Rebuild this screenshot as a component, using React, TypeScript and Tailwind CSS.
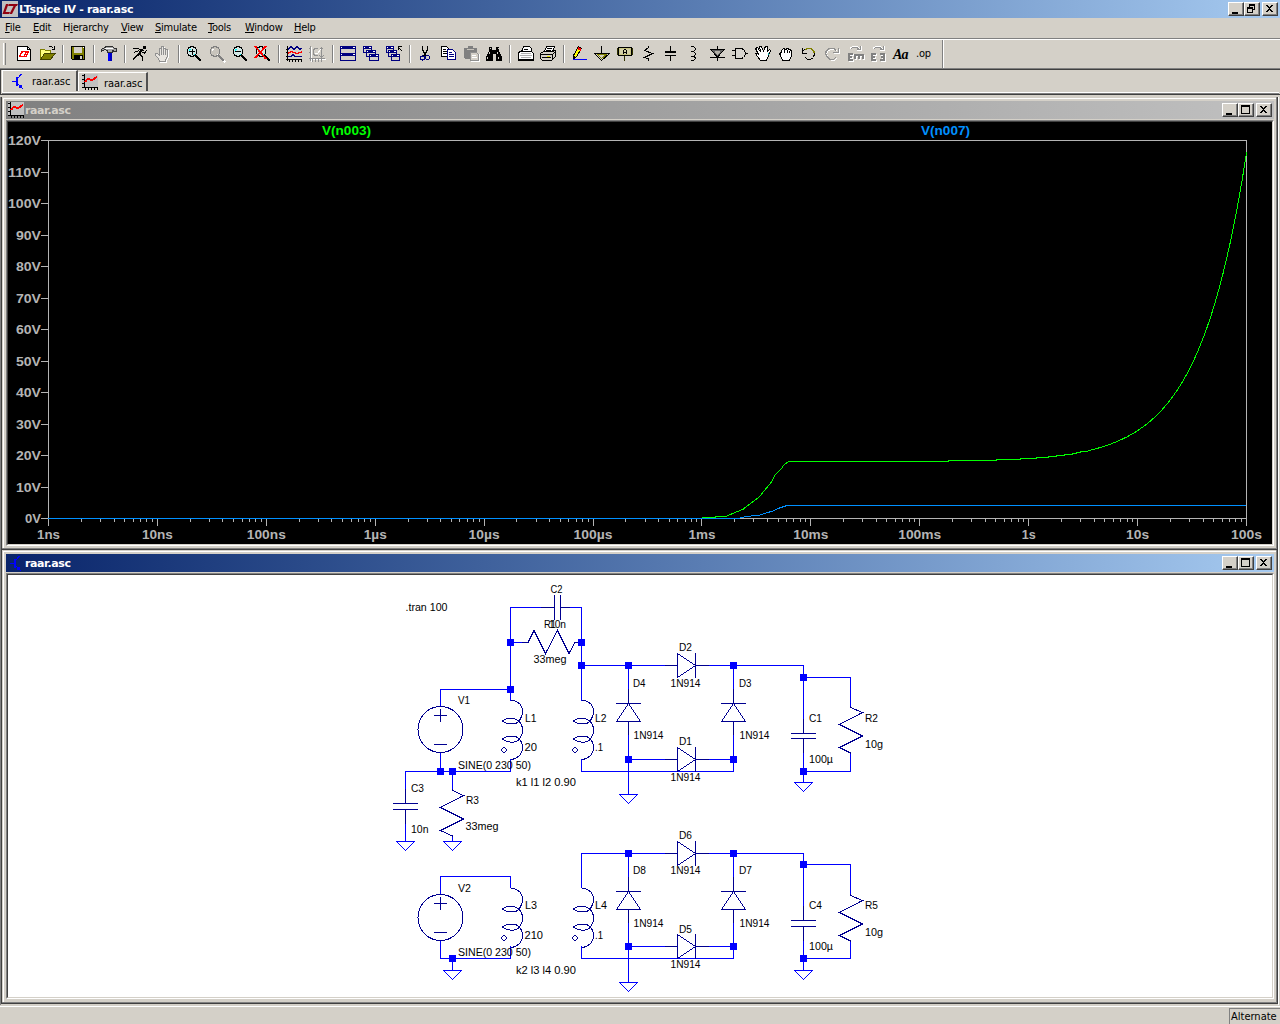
import React from "react";

type LineProps = { d: string; c?: string; f?: string; w?: number };
const L = ({ d, c = "#000", f = "none", w = 1 }: LineProps) => (
  <path d={d} stroke={c} fill={f} strokeWidth={w} />
);

const Icon = ({ children }: { children: React.ReactNode }) => (
  <div className="w-[23px] shrink-0 pl-[3px] pt-[5px]">
    <svg width="19" height="18" viewBox="0 0 19 18" shapeRendering="crispEdges" className="block overflow-visible">
      {children}
    </svg>
  </div>
);

const Sep = () => (
  <div className="flex h-[28px] w-[8px] shrink-0 items-center pl-[4px]">
    <div className="h-[18px] w-[2px] border-l border-r border-l-[#808080] border-r-white" />
  </div>
);

const Magnifier = ({ gray = false }: { gray?: boolean }) => (
  <>
    {gray && <L d="M12.5 12.5L17.5 17.5" c="#fff" w={2} />}
    <L d="M11 11L16 16" c={gray ? "#808080" : "#000"} w={2.4} />
    <circle cx="7" cy="6.5" r="4.8" fill={gray ? "#c8c4bc" : "#d4e8e6"} stroke={gray ? "#808080" : "#000"} strokeWidth="1.2" />
    <L d="M4.5 5.5V4.5H5.5M9.5 9.5V8.5" c={gray ? "#fff" : "#00ffff"} />
  </>
);

const HAND = "M5.5 16.5L4.5 13.5L1.5 10.5V8.5H3.5L5.5 10.5V3.5H7.5V1.5H9.5V3.5H11.5V4.5H13.5V11.5L11.5 14.5V16.5Z";

const MiniWin = ({ x, y, w = 9, h = 7 }: { x: number; y: number; w?: number; h?: number }) => (
  <>
    <rect x={x} y={y} width={w} height={h} fill="#000080" />
    <rect x={x + 1} y={y + 3} width={w - 2} height={h - 4} fill="#d4d0c8" />
    <rect x={x + 1} y={y + 1} width="1" height="1" fill="#fff" />
    <rect x={x + w - 3} y={y + 1} width="2" height="1" fill="#fff" />
  </>
);

const RotLetters = ({ mirror = false }: { mirror?: boolean }) => {
  const left = "M2 8h5v2H4v1h2v2H4v1h3v2H2z";
  const right = mirror ? "M11 8h5v8h-5v-2h3v-1h-2v-2h2v-1h-3z" : "M8 9h10v5h-2v-3h-2v3h-2v-3h-2v3H8z";
  return (
    <>
      <path d={left + right} fill="#fff" transform="translate(1 1)" />
      <L d="M4.5 4V3L6.5 1.5H11.5L14.5 4.5M15.5 1V5.5H11" c="#fff" />
      <L d="M5.5 4V3.5L7 2.5H11L13.5 4.5M14.5 1V4.5H11" c="#909090" />
      <path d={left + right} fill="#808080" />
    </>
  );
};

const Toolbar = () => (
  <div className="flex h-[28px] items-start">
    <div className="mt-[3px] ml-[3px] h-[22px] w-[3px] border-l border-r border-l-white border-r-[#808080]" />
    <div className="w-[6px]" />
    <Icon>
      <L d="M2.5 1.5H12.5L15.5 4.5V15.5H2.5Z" f="#fff" />
      <L d="M12.5 1.5V4.5H15.5" />
      <L d="M7.5 6L4.5 11.5H8.5M8 6.5H14M11.5 6.5L9 11.5H11L13.5 6.5" c="#f00" w={1.6} />
    </Icon>
    <Icon>
      <L d="M2.5 14V4.5H6.5L7.5 5.5H12.5V8" f="#ffff80" c="#808000" />
      <L d="M2.5 14.5L6.5 8.5H17L12.5 14.5Z" f="#808000" c="#404000" />
      <L d="M10.5 2.5L11.5 1.5H13.5L15.5 3.5M16.5 1V4.5H13.5" />
    </Icon>
    <Sep />
    <Icon>
      <L d="M2.5 1.5H15.5V14.5H3.5L2.5 13.5Z" f="#808000" />
      <rect x="5" y="2" width="8" height="6" fill="#d4d0c8" />
      <rect x="5" y="10" width="9" height="5" fill="#000" />
      <rect x="11" y="11" width="2" height="3" fill="#d4d0c8" />
      <rect x="14" y="2" width="1" height="1" fill="#fff" />
    </Icon>
    <Sep />
    <Icon>
      <rect x="8" y="7" width="4" height="9" fill="#0000c0" />
      <rect x="8" y="7" width="2" height="9" fill="#0000ff" />
      <L d="M1.5 6.5V4.5L4.5 2.5L6.5 1.5H12.5L14.5 3.5H16.5V6.5H14.5L12.5 5.5V7.5H7.5V5.5L4.5 4.5Z" f="#a8a8a8" c="#303030" />
      <L d="M5 3.5H13" c="#fff" />
    </Icon>
    <Sep />
    <Icon>
      <rect x="12" y="1" width="3" height="3" fill="#000" />
      <L d="M2 3.5H7.5L10.5 5.5H13M15.5 5L13.5 8.5L11 7" />
      <L d="M11 4L7.5 10" w={2.2} />
      <L d="M8 9.5L4.5 11.5L2 14.5M8.5 9.5L11.5 12V15.5H12" w={1.5} />
      <L d="M3 7.5L8 5.5" />
    </Icon>
    <Icon>
      <g transform="translate(1 1)"><L d={HAND} c="#fff" /></g>
      <L d={HAND} c="#909090" f="#e8e5e0" />
      <L d="M7.5 4V10M9.5 4V10M11.5 5V10" c="#909090" />
    </Icon>
    <Sep />
    <Icon><Magnifier /><L d="M4 6.5H10M7.5 4V10" /></Icon>
    <Icon><Magnifier gray /></Icon>
    <Icon><Magnifier /><L d="M4 6.5H10" /></Icon>
    <Icon><Magnifier /><L d="M1 1L12 14M12 1L1 13" c="#f00" w={1.8} /></Icon>
    <Sep />
    <Icon>
      <L d="M2.5 1V15.5M1 14.5H17M4.5 14V17M7.5 14V17M10.5 14V17M13.5 14V17M16.5 14V17M1 4.5H3M1 7.5H3M1 11.5H3" />
      <L d="M3 4.5L6 1.5L9 4.5L12 1.5L15 4.5L17 3" c="#000080" />
      <L d="M3 8.5L6 6.5L9 7.5L12 8.5L17 7" c="#f00" w={1.3} />
      <L d="M3 11.5H6L8 9.5L10 11.5H17" c="#000080" />
    </Icon>
    <Icon>
      <g transform="translate(1 1)"><L d="M2.5 1V15.5M1 13.5H17M5.5 7H9L12 3" c="#fff" /></g>
      <L d="M2.5 1V16M1 13.5H17M4.5 14V17M7.5 14V17M10.5 14V17M13.5 14V17M1 3.5H3M1 7.5H3M10 3.5H7L5.5 5V9L7 10.5H10M13.5 2V12M11.5 4.5L13.5 2.5L15.5 4.5M11.5 10.5L13.5 12.5L15.5 10.5" c="#909090" />
    </Icon>
    <Sep />
    <Icon><MiniWin x={1} y={1} w={16} h={8} /><MiniWin x={1} y={8} w={16} h={8} /></Icon>
    <Icon><MiniWin x={1} y={1} /><MiniWin x={4} y={5} w={10} /><MiniWin x={7} y={9} w={10} /></Icon>
    <Icon><MiniWin x={1} y={1} w={8} /><MiniWin x={3} y={5} /><MiniWin x={6} y={9} /><L d="M17 6L13.5 2.5M13.5 5V1.5H17" /></Icon>
    <Sep />
    <Icon>
      <L d="M6.5 1V5L10.5 11M11.5 1V5L7.5 11" w={1.3} />
      <circle cx="6.5" cy="13" r="2" fill="none" stroke="#000080" strokeWidth="1.2" />
      <circle cx="11.5" cy="12.5" r="2" fill="none" stroke="#000080" strokeWidth="1.2" />
    </Icon>
    <Icon>
      <L d="M2.5 1.5H7.5L10.5 4.5V11.5H2.5Z" f="#fff" />
      <L d="M4 4.5H7M4 6.5H9M4 8.5H9" />
      <L d="M8.5 4.5H13.5L16.5 7.5V14.5H8.5Z" f="#fff" c="#000080" />
      <L d="M10 7.5H13M10 9.5H15M10 11.5H15" c="#000080" />
    </Icon>
    <Icon>
      <path d="M2 3h4V1h5v2h4v11H3l-1-1z" fill="#808080" />
      <L d="M5 4.5H12" c="#c8c4bc" />
      <L d="M8.5 7.5H14.5L16.5 9.5V15.5H8.5Z" f="#d4d0c8" c="#909090" />
      <L d="M10 10.5H14M10 12.5H15M17.5 9V16.5H9" c="#fff" />
    </Icon>
    <Icon>
      <path d="M4 2h3v3h4V2h3v4l3 6v4h-6V9H8v7H1v-4l3-6z" fill="#000" />
      <L d="M4.5 7V9M2.5 12V14M12.5 7V9M13.5 12V14M5.5 3V4M13.5 3V4" c="#d4d0c8" />
    </Icon>
    <Sep />
    <Icon>
      <L d="M5.5 7L7.5 1.5H13.5L15.5 3.5V7" f="#fff" />
      <L d="M3.5 6.5H15.5L17.5 8.5V15.5H2.5V8.5Z" f="#fff" />
      <L d="M5 8.5H15M4 10.5H16M5 12.5H15" c="#b0b0b0" />
      <L d="M8 4.5H12M2.5 14.5H17" />
    </Icon>
    <Icon>
      <L d="M5.5 6.5L7.5 1.5H15.5L13.5 7" f="#fff" />
      <L d="M1.5 8.5L4.5 6.5H13.5L16.5 5.5V11.5L12.5 15.5H3.5L1.5 13.5Z" f="#d4d0c8" />
      <L d="M8 3.5H13M7 5.5H12M2 9.5H13.5L16 7M13.5 10V14M3 12.5H12" />
      <L d="M8 11.5H11" c="#e0e000" />
    </Icon>
    <Sep />
    <Icon>
      <L d="M8.5 1.5L11.5 3.5L6.5 11.5L3.5 13.5V10.5Z" f="#ff0" />
      <L d="M8 3L11 5" c="#f00" w={2} />
      <L d="M3.5 11V14" w={2} />
      <rect x="3" y="14" width="14" height="1" fill="#00f" />
    </Icon>
    <Icon><L d="M8.5 1V8" /><L d="M1.5 8.5H16.5L8.5 15.5Z" f="#d4d0c8" /><L d="M4.5 9.5H13.5L8.5 13.5Z" c="#808000" /></Icon>
    <Icon>
      <L d="M2.5 2.5H15.5V10.5H2.5Z" f="#d4d0a8" /><L d="M1.5 3V10M16.5 3V10M8.5 11V16" c="#303000" />
      <L d="M3.5 3.5H14.5V9.5H3.5Z" c="#c8c480" />
      <L d="M7.5 9V5.5L8.5 4.5H9.5L10.5 5.5V9M7 7.5H11" />
    </Icon>
    <Icon><L d="M9.5 0.5V2.5L5.5 5.5L13.5 8.5L5.5 12.5L9.5 14V16" /></Icon>
    <Icon><L d="M8.5 1V7M3 7H14M3 10.5H14M8.5 10.5V16" w={1.2} /></Icon>
    <Icon><L d="M6 1.5H8.5L10.5 3.5V4.5L8.5 6.5L10.5 8.5V9.5L8.5 11.5M8.5 11.5L10.5 12.5V13.5L8.5 15.5H6M6 6.5H9M6 11.5H9" /></Icon>
    <Icon><L d="M9.5 1V16M2 4.5H17M2 12.5H17M3 5L9.5 12L16 5" /><L d="M5 5.5H14L9.5 10.5Z" f="#b4b0a8" c="#606060" /></Icon>
    <Icon><L d="M1 5.5H5M1 10.5H5M14 8.5H17" /><L d="M4.5 3.5H10.5L12.5 4.5L14.5 7.5V9.5L12.5 12.5L10.5 13.5H4.5Z" f="#d8d5cf" /></Icon>
    <Icon>
      <L d="M6.5 15.5L3.5 11.5L1.5 8.5H3.5L4.5 9.5L1.5 3.5L3.5 2.5L6.5 7L5.5 1.5H7.5L9.5 6L11.5 1.5H13.5V6L15.5 4.5L16.5 5.5L14.5 10.5L12.5 15.5Z" f="#fff" />
      <L d="M14.5 8V10" c="#00a0a0" />
    </Icon>
    <Icon><L d="M5.5 15.5L3.5 10.5L2.5 8.5L4.5 7.5V5.5L6.5 3.5L8.5 4.5L10.5 3.5L12.5 4.5L14.5 5.5V10.5L12.5 15.5Z" f="#fff" /><L d="M7.5 5V8M10.5 5V8M12.5 6V8" /></Icon>
    <Icon><L d="M3 5.5L7.5 3.5H10.5L13.5 5.5L14.5 8.5L13.5 12.5L10.5 14.5H7.5L5.5 12.5" /><L d="M5.5 4.5L7.5 3.5H10.5L13.5 5.5L14.5 8.5" c="#808000" w={1.6} /><L d="M2.5 3V8.5H7" w={1.2} /></Icon>
    <Icon>
      <g transform="translate(1 1)"><L d="M13.5 5.5L10.5 3.5H6.5L3.5 5.5L2.5 8.5L4.5 12.5L7.5 14.5H10.5L12.5 12.5M15.5 3V7.5H10" c="#fff" /></g>
      <L d="M13.5 5.5L10.5 3.5H6.5L3.5 5.5L2.5 8.5L4.5 12.5L7.5 14.5H10.5L12.5 12.5M15.5 3V7.5H10" c="#909090" w={1.3} />
    </Icon>
    <Icon><RotLetters /></Icon>
    <Icon><RotLetters mirror /></Icon>
    <div className="w-[23px] pt-[6px] pl-[4px] font-['Liberation_Serif',serif] text-[14px] leading-[18px] font-bold tracking-[-0.8px] text-black italic">Aa</div>
    <div className="w-[23px] pt-[6px] pl-[4px] font-['DejaVu_Sans_Condensed',sans-serif] text-[11px] leading-[16px] tracking-[-0.2px] text-black">.op</div>
    <div className="ml-[7px] h-[28px] w-[2px] border-l border-r border-l-[#808080] border-r-white" />
  </div>
);

const CaptionButton = ({ kind }: { kind: "min" | "max" | "restore" | "close" }) => (
  <div
    className={
      "h-[14px] w-[16px] border border-t-white border-l-white border-r-[#404040] border-b-[#404040] bg-[#d4d0c8] shadow-[inset_-1px_-1px_0_#808080]" +
      (kind === "close" ? " ml-[2px]" : "")
    }
  >
    <svg width="14" height="12" viewBox="0 0 14 12" shapeRendering="crispEdges" className="block">
      {kind === "min" && <rect x="3" y="9" width="6" height="2" fill="#000" />}
      {kind === "max" && <><rect x="2.5" y="1.5" width="8" height="8" fill="none" stroke="#000" /><rect x="2" y="1" width="9" height="2" fill="#000" /></>}
      {kind === "restore" && (
        <>
          <rect x="4.5" y="1.5" width="5" height="5" fill="none" stroke="#000" />
          <rect x="4" y="1" width="6" height="2" fill="#000" />
          <rect x="2.5" y="4.5" width="5" height="5" fill="#d4d0c8" stroke="#000" />
          <rect x="2" y="4" width="6" height="2" fill="#000" />
        </>
      )}
      {kind === "close" && <path d="M3 2h2v1h1v1h1V3h1V2h2v1H9v1H8v1H7v1h1v1h1v1h1v1H8V8H7V7H6v1H5v1H3V8h1V7h1V6h1V5H5V4H4V3H3z" fill="#000" />}
    </svg>
  </div>
);

const PlotIcon = () => (
  <svg width="17" height="17" viewBox="0 0 17 17" shapeRendering="crispEdges" className="block shrink-0">
    <rect x="0" y="0" width="16" height="13" fill="#c0c0c0" />
    <L d="M2.5 0V13.5M0 13.5H16M0 1.5H3M0 5.5H3M0 9.5H3M3.5 14V16M6.5 14V16M9.5 14V16M12.5 14V16M15.5 14V16" />
    <L d="M3 8L6 4.5L10 6.5L15 2.5" c="#f00" w={1.8} />
  </svg>
);

const TransistorIcon = () => (
  <svg width="13" height="17" viewBox="0 0 13 17" shapeRendering="crispEdges" className="block shrink-0">
    <L d="M0 8.5H4M9.5 1L5 6M5 10L9.5 15" c="#00f" />
    <rect x="4" y="4" width="2" height="9" fill="#00f" />
    <path d="M6 14L11 16L9 11z" fill="#00f" />
  </svg>
);

const menu: [string, string, string, string][] = [
  ["", "F", "ile", "w-[28px]"],
  ["", "E", "dit", "w-[30px]"],
  ["H", "i", "erarchy", "w-[58px]"],
  ["", "V", "iew", "w-[34px]"],
  ["", "S", "imulate", "w-[53px]"],
  ["", "T", "ools", "w-[37px]"],
  ["", "W", "indow", "w-[49px]"],
  ["", "H", "elp", "w-[30px]"],
];

const X0 = 48.5;
const DEC = 1198 / 11;
const yOf = (v: number) => 518.5 - v * 3.15;
// The shallow part is stepped to whole pixels so the hairline stays unbroken.
const rise: string = Array.from({ length: 112 }, (_, i) => {
  const x = 802.5 + i * 4;
  const t = Math.pow(10, (x - X0) / DEC - 9);
  const y = yOf(18.1 + 0.98 * t);
  return `${x} ${x < 1090 ? Math.floor(y + 0.1) + 0.5 : y.toFixed(1)}`;
}).join("L");

const xl: [string, number][] = [
  ["1ns", 23], ["10ns", 31], ["100ns", 39], ["1µs", 23], ["10µs", 31], ["100µs", 39],
  ["1ms", 27], ["10ms", 35], ["100ms", 43], ["1s", 14], ["10s", 23], ["100s", 31],
];

const Plot = () => (
  <svg width="1264" height="422" viewBox="8 122 1264 422" className="block bg-black font-['Liberation_Sans',sans-serif] text-[13px] font-bold">
    <g shapeRendering="crispEdges" stroke="#b4b4b4" fill="none">
      <rect x="48.5" y="140.5" width="1198" height="378" />
      {Array.from({ length: 13 }, (_, i) => (
        <path key={i} d={`M41 ${Math.floor(yOf(i * 10)) + 0.5}H48`} />
      ))}
      {Array.from({ length: 12 }, (_, i) => (
        <path key={i} d={`M${Math.floor(X0 + i * DEC) + 0.5} 519V526`} />
      ))}
      {Array.from({ length: 11 }, (_, i) =>
        [2, 3, 4, 5, 6, 7, 8, 9].map((m) => (
          <path key={`${i}-${m}`} d={`M${Math.floor(X0 + (i + Math.log10(m)) * DEC) + 0.5} 519V522`} />
        ))
      )}
    </g>
    <g shapeRendering="crispEdges" fill="none">
      <path stroke="#00ff00" d={`M48 518.5H701L704 517.5H715L716 516.5H726L730 514.7L737 511.7L743 509.3L752 502.3L759 497.3L765 489.7L771 482.7L775 474.7L781 469.3L784 464.7L789 461.5L${rise}L1246.5 152`} />
      <path stroke="#0090ff" d="M48 518.5H738L746 516.5L759 515.3L765 513.3L772 511.3L778 508.5L787 505.5H1246" />
    </g>
    <g fill="#b4b4b4">
      {Array.from({ length: 13 }, (_, i) => {
        const w = i === 0 ? 16 : i < 10 ? 25 : 33;
        return (
          <text key={i} x={41 - w} y={Math.floor(yOf(i * 10)) + 5} textLength={w} lengthAdjust="spacingAndGlyphs">{`${i * 10}V`}</text>
        );
      })}
      {xl.map(([s, w], i) => (
        <text key={s} x={X0 + i * DEC - w / 2} y="539" textLength={w} lengthAdjust="spacingAndGlyphs">{s}</text>
      ))}
    </g>
    <text x="322" y="135" fill="#00ff00" textLength="49" lengthAdjust="spacingAndGlyphs">V(n003)</text>
    <text x="921" y="135" fill="#0090ff" textLength="49" lengthAdjust="spacingAndGlyphs">V(n007)</text>
  </svg>
);

const NAVY = "#000090";
const Inductor = ({ x, y }: { x: number; y: number }) => (
  <g transform={`translate(${x + 0.5} ${y + 0.5})`} stroke={NAVY} fill="none">
    <path d="M0 0H3C8 1 12 5 12 11C12 16 9 21 6 22.5C1 24.5 -6 23 -8 20.5C-5 18 1 16.5 6 19C10 21 12 25 12 30C12 35 9 39.5 6 41C1 42.5 -6 41 -8 38.5C-5 36 1 34.5 6 36.5C10 38.5 12 43 12 48C12 53 8 57 3 58.5H0" />
    <circle cx="-6.5" cy="49.5" r="2.2" />
  </g>
);
const Resistor = ({ x, y, dx = 12 }: { x: number; y: number; dx?: number }) => (
  <path d={`M${x + 0.5} ${y}v1.5l${dx} 5l-23 12l23 11.5l-23 11.5l${23 - dx} 5.5v1`} stroke={NAVY} fill="none" />
);
const Gnd = ({ x, y }: { x: number; y: number }) => (
  <path d={`M${x - 8.5} ${y + 0.5}h18l-9 9z`} stroke="#0000ff" fill="none" />
);
const DiodeH = ({ y }: { y: number }) => (
  <path d={`M665 ${y + 0.5}H677M677.5 ${y - 11.5}v24l18 -12zM695.5 ${y - 12}v25M695 ${y + 0.5}h14`} stroke={NAVY} fill="none" />
);
const DiodeV = ({ x, y }: { x: number; y: number }) => (
  <path d={`M${x - 12} ${y + 0.5}h25M${x + 0.5} ${y - 14}v14.5l-12 18h24l-12 -18M${x + 0.5} ${y + 18}v14`} stroke={NAVY} fill="none" />
);
const Source = ({ x, y }: { x: number; y: number }) => (
  <g stroke={NAVY} fill="none">
    <ellipse cx={x + 0.5} cy={y + 0.5} rx="22.5" ry="23" />
    <path d={`M${x - 6} ${y - 13.5}h13M${x + 0.5} ${y - 20}v13M${x - 6} ${y + 15.5}h13`} />
  </g>
);
const CapV = ({ x, y, g = 6 }: { x: number; y: number; g?: number }) => (
  <path d={`M${x - 12} ${y + 0.5}h25M${x - 12} ${y + g + 0.5}h25M${x + 0.5} ${y - 14}v14M${x + 0.5} ${y + g}v15`} stroke={NAVY} fill="none" />
);

const wires =
  "M440.5 706V689.5H510.5M510.5 701V607.5H541M570 607.5H581.5V701M510 642.5H522M440.5 753V771.5M405.5 789V771.5H510.5V759M452.5 771V789M405.5 823V841M452.5 836V841" +
  "M581 665.5H665M709 665.5H803.5V719M803 677.5H850.5V706M628.5 665V689M628.5 735V794M733.5 665V689M733.5 735V771.5H581.5V759M628 759.5H665M709 759.5H733M803.5 753V782M803 771.5H850.5V753" +
  "M440.5 894V876.5H510.5V888M440.5 940V958.5H510.5V946M452.5 958V970M581.5 888V853.5H665M709 853.5H803.5V906M803 864.5H850.5V894M628.5 853V877M628.5 922V982M733.5 853V877M733.5 922V958.5H581.5V946M628 946.5H665M709 946.5H733M803.5 940V970M803 958.5H850.5V941";

const dots: [number, number][] = [
  [510, 642], [581, 642], [581, 665], [510, 689], [440, 771], [452, 771], [628, 665], [733, 665], [628, 759], [733, 759],
  [803, 677], [803, 771], [452, 958], [628, 853], [733, 853], [628, 946], [733, 946], [803, 864], [803, 958],
];

const labels: [string, number, number, number][] = [
  [".tran 100", 405.5, 611, 42], ["C2", 550.5, 593, 12], ["R1", 544, 628, 12], ["10n", 549, 628, 17], ["33meg", 533.5, 663, 33],
  ["V1", 458, 704, 12], ["L1", 525, 722, 11.5], ["20", 524.5, 751, 12.5], ["SINE(0 230 50)", 458, 769, 73], ["k1 l1 l2 0.90", 516, 786, 60],
  ["C3", 411, 792, 13], ["10n", 411, 833, 17.5], ["R3", 466, 804, 13], ["33meg", 465.5, 830, 33],
  ["L2", 595, 722, 11.5], [".1", 595, 751, 8], ["D2", 679, 651, 13], ["1N914", 670.5, 687, 30], ["D4", 633, 687, 12.5], ["1N914", 633.5, 739, 30],
  ["D3", 739, 687, 12.5], ["1N914", 739.5, 739, 30], ["D1", 679, 745, 13], ["1N914", 670.5, 781, 30], ["C1", 809, 722, 13], ["100µ", 809, 763, 24],
  ["R2", 865, 722, 13], ["10g", 865, 748, 18],
  ["V2", 458, 892, 13], ["L3", 525, 909, 12], ["210", 524.5, 939, 18.5], ["SINE(0 230 50)", 458, 956, 73], ["k2 l3 l4 0.90", 516, 974, 60],
  ["L4", 595, 909, 12], [".1", 595, 939, 8], ["D6", 679, 839, 13], ["1N914", 670.5, 874, 30], ["D8", 633, 874, 13], ["1N914", 633.5, 927, 30],
  ["D7", 739, 874, 13], ["1N914", 739.5, 927, 30], ["D5", 679, 933, 13], ["1N914", 670.5, 968, 30], ["C4", 809, 909, 13], ["100µ", 809, 950, 24],
  ["R5", 865, 909, 13], ["10g", 865, 936, 18],
];

const Schematic = () => (
  <svg width="1264" height="422" viewBox="8 575 1264 422" className="block bg-white font-['Liberation_Sans',sans-serif] text-[10px]">
    <g shapeRendering="crispEdges">
      <path d={wires} stroke="#0000ff" fill="none" />
      <path d="M541 607.5H554M554.5 595V620M560.5 595V620M560 607.5H570M522 642.5H528L534 630.5L545.5 653.5L557.5 630.5L569 653.5L575 642.5H581" stroke={NAVY} fill="none" />
      <Source x={440} y={729} />
      <Source x={440} y={917} />
      <Inductor x={510} y={700} />
      <Inductor x={581} y={700} />
      <Inductor x={510} y={888} />
      <Inductor x={581} y={888} />
      <CapV x={405} y={803} />
      <CapV x={803} y={733} g={5} />
      <CapV x={803} y={920} />
      <Resistor x={452} y={789} dx={11} />
      <Resistor x={850} y={706} />
      <Resistor x={850} y={894} />
      <DiodeH y={665} />
      <DiodeH y={759} />
      <DiodeH y={853} />
      <DiodeH y={946} />
      <DiodeV x={628} y={703} />
      <DiodeV x={733} y={703} />
      <DiodeV x={628} y={891} />
      <DiodeV x={733} y={891} />
      <Gnd x={405} y={841} />
      <Gnd x={452} y={841} />
      <Gnd x={628} y={794} />
      <Gnd x={803} y={782} />
      <Gnd x={452} y={970} />
      <Gnd x={628} y={982} />
      <Gnd x={803} y={970} />
      {dots.map(([x, y]) => (
        <rect key={`${x}-${y}`} x={x - 3} y={y - 3} width="7" height="7" fill="#0000ff" />
      ))}
    </g>
    {labels.map(([s, x, y, w], i) => (
      <text key={i} x={x} y={y} textLength={w} lengthAdjust="spacingAndGlyphs" fill="#000">{s}</text>
    ))}
  </svg>
);

const ChildWindow = ({ active, children }: { active: boolean; children: React.ReactNode }) => (
  <div className="border-r border-b border-[#404040]">
    <div className="border-r border-b border-[#808080] bg-[#d4d0c8] pt-px pl-px">
      <div className={"border-t border-l border-white pt-[2px] pr-[2px] pl-[2px] " + (active ? "pb-[3px]" : "pb-[2px]")}>
        <div
          className={
            "flex h-[18px] items-center bg-linear-to-r pr-[2px] " +
            (active ? "from-[#0a246a] to-[#a6caf0] text-white" : "from-[#808080] to-[#c0c0c0] text-[#d4d0c8]")
          }
        >
          <div className="flex h-[17px] w-[19px] items-center pl-[2px]">{active ? <div className="pl-[2px]"><TransistorIcon /></div> : <PlotIcon />}</div>
          <span className="flex-1 font-['DejaVu_Sans',sans-serif] text-[11px] leading-[17px] font-bold tracking-[-0.4px]">raar.asc</span>
          <CaptionButton kind="min" />
          <CaptionButton kind="max" />
          <CaptionButton kind="close" />
        </div>
        <div className="mt-px border-t border-l border-r border-b border-t-[#808080] border-l-[#808080] border-r-white border-b-white">
          <div className="border-t border-l border-r border-b border-t-[#404040] border-l-[#404040] border-r-[#d4d0c8] border-b-[#d4d0c8]">{children}</div>
        </div>
      </div>
    </div>
  </div>
);

export default function App() {
  return (
    <div className="flex h-[1024px] w-[1280px] flex-col overflow-hidden bg-[#d4d0c8] font-['DejaVu_Sans_Condensed','DejaVu_Sans',sans-serif] text-[11px] text-black">
      <div className="flex h-[18px] shrink-0 items-center bg-linear-to-r from-[#0a246a] to-[#a6caf0] pr-[2px] pl-[2px]">
        <svg width="16" height="16" viewBox="0 0 16 16" className="block">
          <rect width="16" height="16" fill="#c0c0c0" />
          <path d="M4 3h2.5L3.5 11H8l-1 2H0.5zM7 3h9l-1 2h-1l-4 8H7.5l4-8H6z" fill="#900010" />
        </svg>
        <span className="flex-1 pl-[1px] font-['DejaVu_Sans',sans-serif] text-[11px] leading-[17px] font-bold tracking-[-0.32px] text-white">LTspice IV - raar.asc</span>
        <CaptionButton kind="min" />
        <CaptionButton kind="restore" />
        <CaptionButton kind="close" />
      </div>
      <div className="flex h-[20px] shrink-0 items-center pt-px pl-[5px] tracking-[-0.25px]">
        {menu.map(([a, u, b, w]) => (
          <div key={u + b} className={w + " shrink-0 whitespace-nowrap"}>
            {a}
            <span className="underline underline-offset-1">{u}</span>
            {b}
          </div>
        ))}
      </div>
      <div className="h-[2px] shrink-0 border-t border-b border-t-[#808080] border-b-white" />
      <Toolbar />
      <div className="h-[2px] shrink-0 border-t border-b border-t-[#808080] border-b-[#404040]" />
      <div className="flex h-[25px] shrink-0 items-end border-l border-l-[#404040] border-b border-b-[#404040] pl-px">
        <div className="flex h-[24px] w-[1277px] items-start border-b border-b-[#808080]">
          <div className="flex h-[23px] w-full items-start border-b border-l border-white pb-px">
            <div className="flex h-[21px] w-[75px] items-center border-t border-r-2 border-t-white border-r-[#505050] pl-[9px]">
              <TransistorIcon />
              <span className="pt-[2px] pl-[7px] tracking-[-0.1px]">raar.asc</span>
            </div>
            <div className="mt-[2px] flex h-[19px] w-[70px] items-center border-t border-l border-r-2 border-t-white border-l-white border-r-[#505050] pl-[3px]">
              <PlotIcon />
              <span className="pt-[4px] pl-[5px] tracking-[-0.1px]">raar.asc</span>
            </div>
          </div>
        </div>
      </div>
      <div className="h-[2px] shrink-0" />
      <div className="mr-px flex h-[908px] shrink-0 flex-col border-l border-r border-l-[#808080] border-r-white">
        <div className="flex h-[907px] flex-col border-l border-l-[#404040]">
          <ChildWindow active={false}><Plot /></ChildWindow>
          <ChildWindow active><Schematic /></ChildWindow>
        </div>
      </div>
      <div className="flex h-[19px] shrink-0 justify-end pt-px">
        <div className="flex w-full justify-end border-t border-white pt-px">
          <div className="h-[17px] w-[51px] border-t border-l border-[#808080] pl-px leading-[15px]">Alternate</div>
        </div>
      </div>
    </div>
  );
}
